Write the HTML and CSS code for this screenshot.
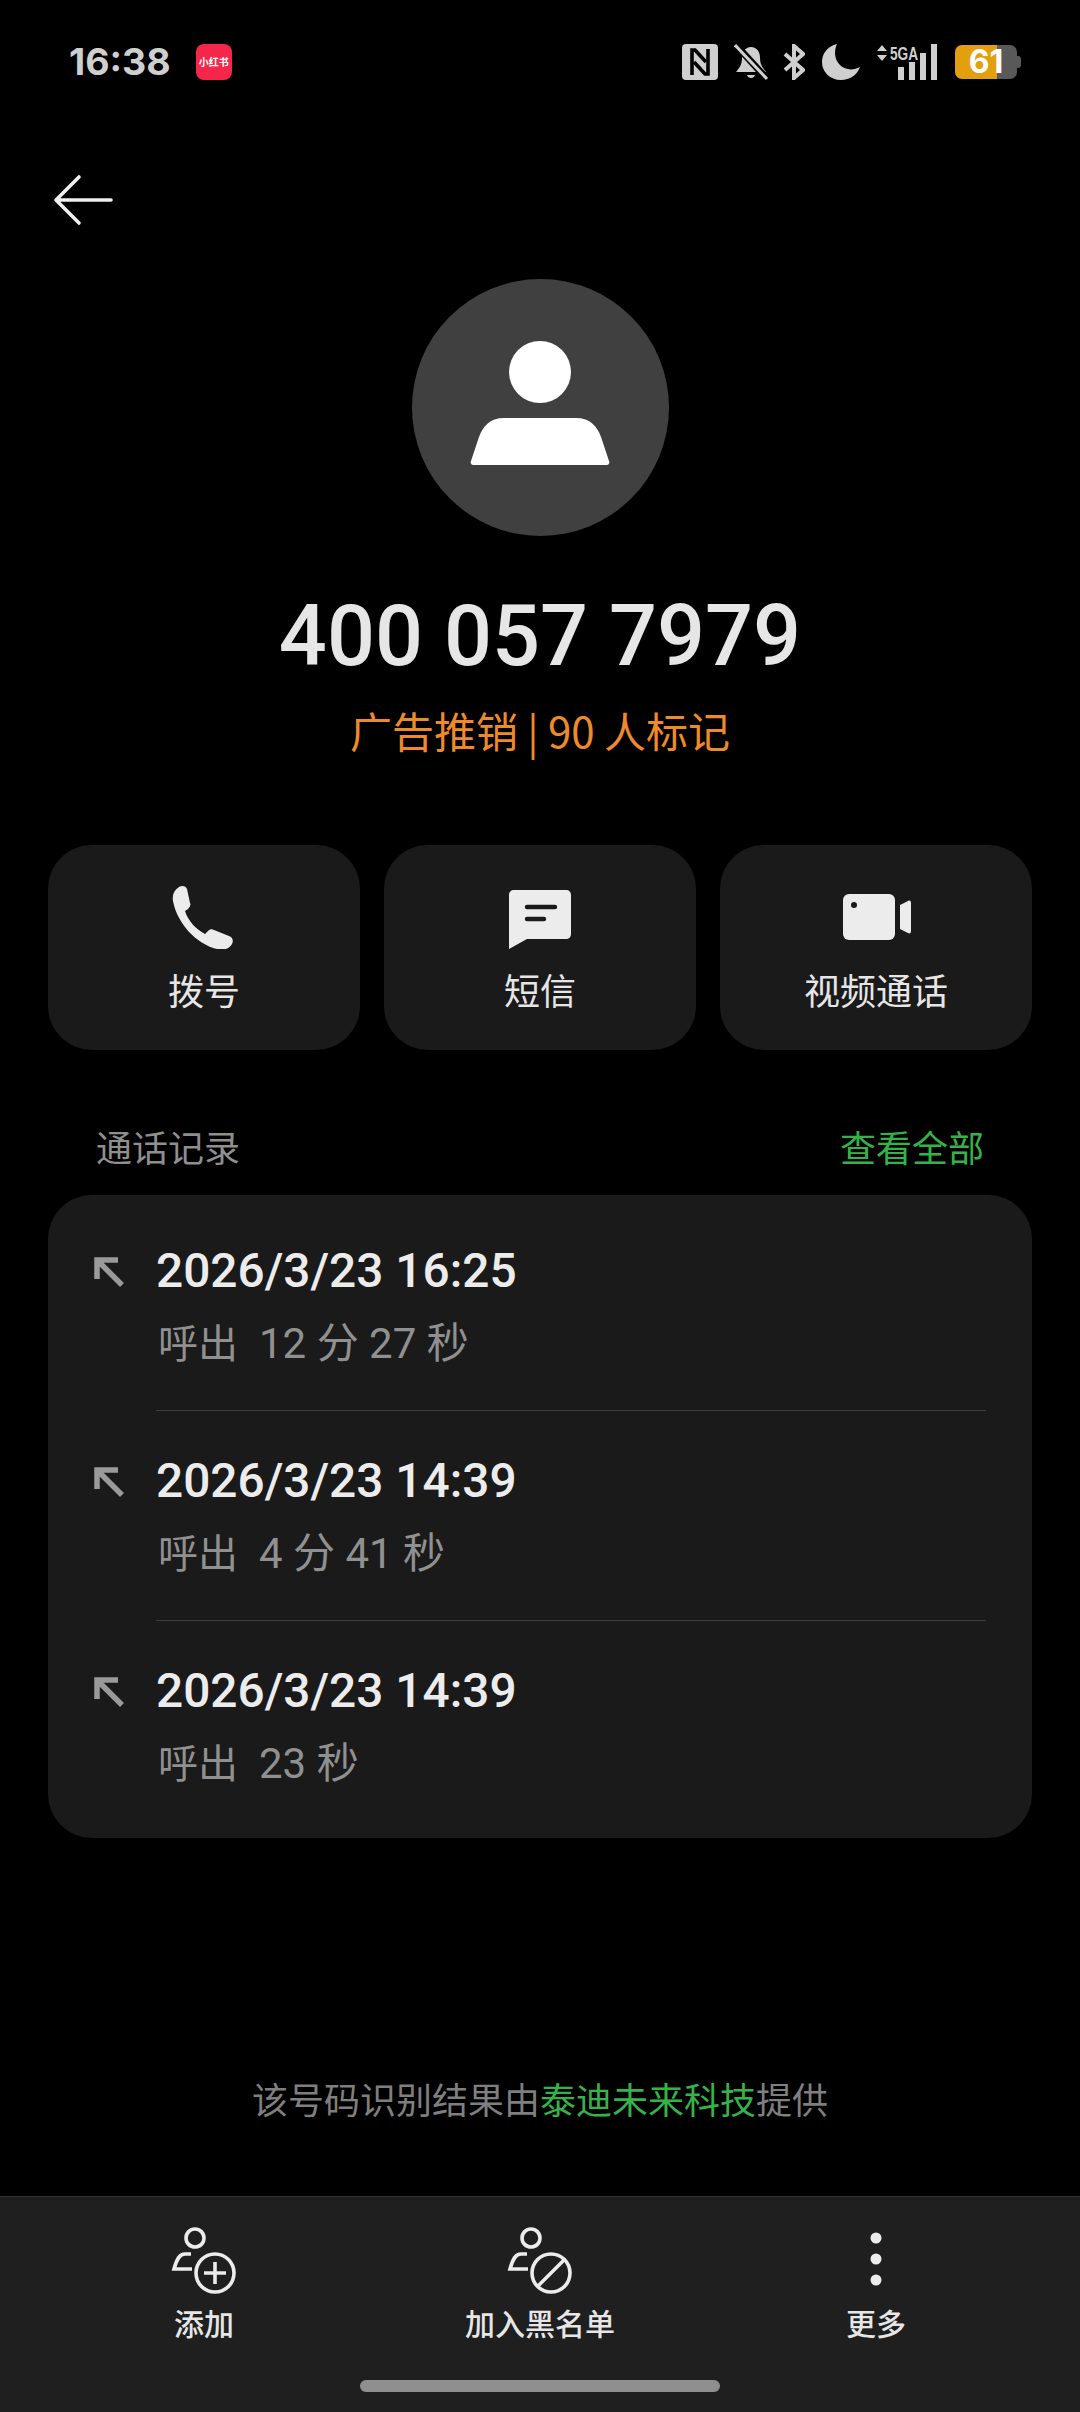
FILE: index.html
```html
<!DOCTYPE html>
<html lang="zh-CN">
<head>
<meta charset="utf-8">
<title>400 057 7979</title>
<link rel="stylesheet" href="styles.css">
</head>
<body>
<div class="page">
  <header class="status">
    <div class="status-left">
      <span class="clock">16:38</span>
      <span class="app-badge">小红书</span>
    </div>
    <div class="status-right">
      <svg class="si-nfc" width="36" height="36" viewBox="0 0 36 36"><rect width="36" height="36" rx="4" fill="#cfcfcf"/><path d="M10 31V6h3l11 12" fill="none" stroke="#000" stroke-width="3.600"/><path d="M26 5v25h-3L12 18" fill="none" stroke="#000" stroke-width="3.600"/></svg>
      <svg class="si-bell" width="34" height="36" viewBox="0 0 34 36"><path d="M17 3c-6 0-9 5-9 11 0 6-2 9-6 14h30c-4-5-6-8-6-14 0-6-3-11-9-11z" fill="#cfcfcf"/><path d="M13 31h8c-1 4-7 4-8 0z" fill="#cfcfcf"/><path d="M1 0l33 36" stroke="#000" stroke-width="7"/><path d="M1 1l32 34" stroke="#cfcfcf" stroke-width="3"/></svg>
      <svg class="si-bt" width="22" height="36" viewBox="0 0 22 36"><path d="M2 10l18 16-9 8V2l9 8L2 26" fill="none" stroke="#cfcfcf" stroke-width="4"/></svg>
      <svg class="si-moon" width="38" height="36" viewBox="0 0 38 36"><path d="M15 0C6 2 0 9 0 18c0 10 8 18 19 18 9 0 16-5 19-13-4 2-8 3-12 2C15 23 10 11 15 0z" fill="#cfcfcf"/></svg>
      <div class="si-signal">
        <svg class="si-updown" width="10" height="16" viewBox="0 0 10 16"><path d="M5 0l5 6H0zM5 16l5-6H0z" fill="#cfcfcf"/></svg>
        <span class="si-5ga">5GA</span>
        <div class="bars"><i class="bar b1"></i><i class="bar b2"></i><i class="bar b3"></i><i class="bar b4"></i></div>
      </div>
      <div class="battery"><span class="battery-level">61</span><i class="battery-cap"></i></div>
    </div>
  </header>

  <nav class="nav">
    <svg width="62" height="52" viewBox="0 0 62 52"><path d="M59 26H4M27 3L4 26l23 23" fill="none" stroke="#f0f0f0" stroke-width="3.600" stroke-linecap="round" stroke-linejoin="round"/></svg>
  </nav>

  <section class="hero">
    <div class="avatar">
      <svg width="140" height="124" viewBox="0 0 140 124"><circle cx="70" cy="31" r="31" fill="#fff"/><path d="M34 77h72c14 0 21 8 25 19l8 24c1 3-1 4-3 4H4c-2 0-4-1-3-4l8-24c4-11 11-19 25-19z" fill="#fff"/></svg>
    </div>
    <h1 class="number">400 057 7979</h1>
    <p class="tag">广告推销 | 90 人标记</p>
  </section>

  <section class="actions">
    <div class="action">
      <svg width="64" height="64" viewBox="0 0 64 64"><path d="M7 2c3-2 7-1 8 2l3 14c1 2 0 4-2 6l-3 2c3 10 11 18 20 23l3-3c2-2 4-2 6-1l15 6c3 1 5 4 3 8-2 4-8 7-15 5C24 59 5 38 1 16 0 10 2 5 7 2z" fill="#ececec"/></svg>
      <span class="action-label">拨号</span>
    </div>
    <div class="action">
      <svg width="64" height="64" viewBox="0 0 64 64"><path d="M6 5h52c3 0 5 2 5 5v39c0 3-2 5-5 5H19L1 64V10c0-3 2-5 5-5z" fill="#ececec"/><path d="M19 22h28M19 34h17" stroke="#1a1a1a" stroke-width="4.400" stroke-linecap="round"/></svg>
      <span class="action-label">短信</span>
    </div>
    <div class="action">
      <svg width="70" height="64" viewBox="0 0 70 64"><rect x="2" y="9" width="52" height="46" rx="6" fill="#ececec"/><circle cx="13" cy="20" r="3" fill="#1a1a1a"/><path d="M59 20l8-4c2-1 3 0 3 2v28c0 2-1 3-3 2l-8-4z" fill="#ececec"/></svg>
      <span class="action-label">视频通话</span>
    </div>
  </section>

  <div class="log-head">
    <span class="log-title">通话记录</span>
    <span class="log-all">查看全部</span>
  </div>

  <section class="log-card">
    <div class="log-row">
      <svg class="log-icon" width="30" height="30" viewBox="0 0 30 30"><path d="M3 22V3h21M3 3l25 25" fill="none" stroke="#9a9a9a" stroke-width="5.500"/></svg>
      <div class="log-text">
        <div class="log-date">2026/3/23 16:25</div>
        <div class="log-sub"><span class="log-dir">呼出</span><span>12 分 27 秒</span></div>
      </div>
    </div>
    <div class="log-row">
      <svg class="log-icon" width="30" height="30" viewBox="0 0 30 30"><path d="M3 22V3h21M3 3l25 25" fill="none" stroke="#9a9a9a" stroke-width="5.500"/></svg>
      <div class="log-text">
        <div class="log-date">2026/3/23 14:39</div>
        <div class="log-sub"><span class="log-dir">呼出</span><span>4 分 41 秒</span></div>
      </div>
    </div>
    <div class="log-row">
      <svg class="log-icon" width="30" height="30" viewBox="0 0 30 30"><path d="M3 22V3h21M3 3l25 25" fill="none" stroke="#9a9a9a" stroke-width="5.500"/></svg>
      <div class="log-text">
        <div class="log-date">2026/3/23 14:39</div>
        <div class="log-sub"><span class="log-dir">呼出</span><span>23 秒</span></div>
      </div>
    </div>
  </section>

  <p class="source">该号码识别结果由<span class="source-link">泰迪未来科技</span>提供</p>

  <footer class="bottom">
    <div class="tabs">
      <div class="tab">
        <svg width="68" height="68" viewBox="0 0 68 68"><g fill="none" stroke="#ececec" stroke-width="3.600"><circle cx="25" cy="11" r="9"/><path d="M21 27h-6c-5 0-8 4-11 15h18"/><circle cx="45" cy="46" r="19"/><path d="M45 35v22M34 46h22"/></g></svg>
        <span class="tab-label">添加</span>
      </div>
      <div class="tab">
        <svg width="68" height="68" viewBox="0 0 68 68"><g fill="none" stroke="#ececec" stroke-width="3.600"><circle cx="25" cy="11" r="9"/><path d="M21 27h-6c-5 0-8 4-11 15h18"/><circle cx="45" cy="46" r="19"/><path d="M58 33L32 59"/></g></svg>
        <span class="tab-label">加入黑名单</span>
      </div>
      <div class="tab">
        <svg width="68" height="68" viewBox="0 0 68 68"><g fill="#ececec"><circle cx="34" cy="11" r="5.500"/><circle cx="34" cy="32" r="5.500"/><circle cx="34" cy="53" r="5.500"/></g></svg>
        <span class="tab-label">更多</span>
      </div>
    </div>
    <div class="home-pill"></div>
  </footer>
</div>
</body>
</html>
```
FILE: styles.css
```css
* { box-sizing: border-box; }
html, body { margin: 0; padding: 0; background: #000; }
body {
  font-family: Roboto, "Noto Sans CJK SC", sans-serif;
  color: #ececec;
}
.page {
  width: 1080px;
  height: 2412px;
  display: flex;
  flex-direction: column;
  overflow: hidden;
}

/* status bar */
.status {
  height: 124px;
  display: flex;
  align-items: center;
  justify-content: space-between;
  padding: 0 63px 0 69px;
  flex: none;
}
.status-left { display: flex; align-items: center; gap: 25px; }
.clock {
  font-family: Inter, Roboto, sans-serif;
  font-weight: 700;
  font-size: 37.500px;
  color: #cfcfcf;
  line-height: 44px;
}
.app-badge {
  width: 36px;
  height: 36px;
  border-radius: 8px;
  background: #f5264a;
  color: #fff;
  font-family: "Noto Sans CJK SC", sans-serif;
  font-weight: 700;
  font-size: 10px;
  line-height: 36px;
  text-align: center;
  white-space: nowrap;
  overflow: hidden;
}
.status-right { display: flex; align-items: center; }
.si-bell { margin-left: 16px; }
.si-bt { margin-left: 15px; }
.si-moon { margin-left: 17px; }
.si-signal {
  position: relative;
  width: 60px;
  height: 36px;
  margin-left: 17px;
}
.si-updown { position: absolute; left: 0; top: 1px; }
.si-5ga {
  position: absolute;
  left: 13px;
  top: 0;
  font-family: "Liberation Sans", sans-serif;
  font-weight: 700;
  font-size: 19px;
  line-height: 20px;
  color: #cfcfcf;
  transform: scaleX(.72);
  transform-origin: left center;
}
.bars {
  position: absolute;
  right: 0;
  bottom: 0;
  display: flex;
  align-items: flex-end;
  gap: 5px;
}
.bar { display: block; width: 6px; background: #cfcfcf; }
.b1 { height: 13px; }
.b2 { height: 18px; }
.b3 { height: 27px; }
.b4 { height: 36px; }
.battery {
  position: relative;
  margin-left: 18px;
  width: 62px;
  height: 34px;
  border-radius: 7px;
  background: linear-gradient(90deg, #e39f0e 0 68%, #595959 68% 100%);
  text-align: center;
}
.battery-level {
  font-family: Inter, Roboto, sans-serif;
  font-weight: 700;
  font-size: 32px;
  line-height: 34px;
  color: #fff;
  display: block;
}
.battery-cap {
  position: absolute;
  right: -4px;
  top: 11px;
  width: 4px;
  height: 12px;
  border-radius: 0 3px 3px 0;
  background: #595959;
}

/* nav */
.nav { height: 155px; padding: 50px 0 0 52px; flex: none; }
.nav svg { display: block; }

/* hero */
.hero { display: flex; flex-direction: column; align-items: center; flex: none; }
.avatar {
  width: 257px;
  height: 257px;
  border-radius: 50%;
  background: #404040;
  display: flex;
  align-items: flex-start;
  justify-content: center;
  padding-top: 62px;
}
.avatar svg { display: block; }
.number {
  margin: 53px 0 0;
  font-weight: 500;
  font-size: 84.500px;
  line-height: 96px;
  color: #e6e6e6;
  white-space: nowrap;
}
.tag {
  margin: 15px 0 3px;
  font-family: "Noto Sans CJK SC", sans-serif;
  font-size: 42px;
  line-height: 60px;
  color: #ef8a2a;
  font-weight: 400;
}

/* action buttons */
.actions {
  margin: 82px 48px 0;
  display: grid;
  grid-template-columns: repeat(3, 1fr);
  gap: 24px;
  flex: none;
}
.action {
  height: 205px;
  border-radius: 44px;
  background: #1a1a1a;
  display: flex;
  flex-direction: column;
  align-items: center;
  padding-top: 40px;
}
.action svg { display: block; }
.action-label {
  margin-top: 14px;
  font-family: "Noto Sans CJK SC", sans-serif;
  font-size: 36px;
  line-height: 52px;
  color: #e6e6e6;
}

/* log */
.log-head {
  margin-top: 66px;
  padding: 0 96px;
  height: 60px;
  display: flex;
  align-items: center;
  justify-content: space-between;
  font-family: "Noto Sans CJK SC", sans-serif;
  font-size: 36px;
  flex: none;
}
.log-title { color: #8f8f8f; }
.log-all { color: #35b34a; }
.log-card {
  margin: 19px 48px 0;
  padding: 6px 0 7px;
  border-radius: 44px;
  background: #1a1a1a;
  flex: none;
}
.log-row { position: relative; display: flex; height: 210px; padding: 42px 46px 0 46px; }
.log-icon { margin-top: 14px; margin-right: 32px; flex: none; display: block; }
.log-text { flex: 1; height: 168px; border-bottom: 1px solid #3d3d3d; }
.log-row:last-child .log-text { border-bottom: 0; }
.log-date {
  font-weight: 500;
  font-size: 47.800px;
  line-height: 56px;
  color: #ececec;
  white-space: nowrap;
}
.log-sub {
  margin-top: 15px;
  display: flex;
  align-items: baseline;
  gap: 21px;
  font-size: 42px;
  line-height: 60px;
  color: #909090;
  padding-left: 2px;
}
.log-dir { font-size: 40px; }

/* source note */
.source {
  margin: auto 0 73px;
  text-align: center;
  font-family: "Noto Sans CJK SC", sans-serif;
  font-size: 36px;
  line-height: 50px;
  color: #7f7f7f;
}
.source-link { color: #35b34a; }

/* bottom bar */
.bottom {
  height: 216px;
  flex: none;
  background: #1f1f1f;
  border-top: 1px solid #333;
  display: flex;
  flex-direction: column;
  align-items: center;
  position: relative;
}
.tabs {
  width: 100%;
  padding: 30px 36px 0;
  display: grid;
  grid-template-columns: repeat(3, 1fr);
}
.tab { display: flex; flex-direction: column; align-items: center; }
.tab svg { display: block; }
.tab-label {
  margin-top: 6px;
  font-family: "Noto Sans CJK SC", sans-serif;
  font-weight: 500;
  font-size: 30px;
  line-height: 42px;
  color: #e6e6e6;
}
.home-pill {
  position: absolute;
  left: 360px;
  bottom: 20px;
  width: 360px;
  height: 12px;
  border-radius: 6px;
  background: #8f8f8f;
}
```
